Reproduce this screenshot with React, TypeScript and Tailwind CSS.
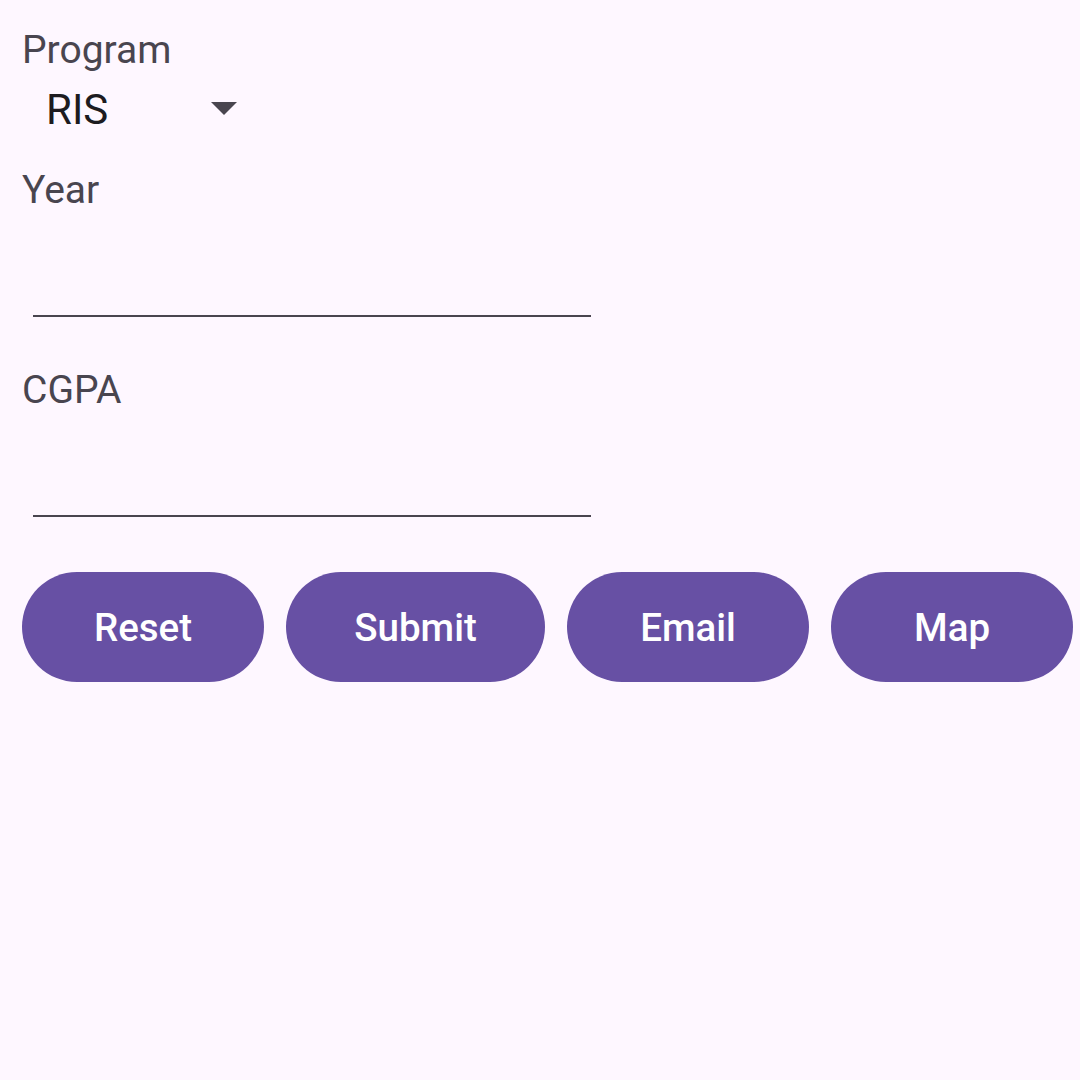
import { useState } from "react";

const buttons = [
  { label: "Reset", width: "w-[242px]" },
  { label: "Submit", width: "w-[259px]" },
  { label: "Email", width: "w-[242px]" },
  { label: "Map", width: "w-[242px]" },
];

export default function App() {
  const [program] = useState("RIS");
  const [year, setYear] = useState("");
  const [cgpa, setCgpa] = useState("");

  return (
    <div
      className="min-h-[1080px] w-[1080px] bg-[#fef7ff] px-[22px] pt-[28px]"
      style={{ fontFamily: "Roboto, 'Noto Sans', sans-serif" }}
    >
      <div className="text-[39px] leading-[45px] text-[#49454f]">Program</div>
      <div className="mt-[11px] flex h-[52px] w-[215px] items-center justify-between pl-[24px]">
        <span className="text-[42px] leading-[52px] text-[#1d1b20]">{program}</span>
        <svg width="26" height="14" viewBox="0 0 26 14" className="mt-[-2px]">
          <polygon points="0,0 26,0 13,13" fill="#49454f" />
        </svg>
      </div>

      <div className="mt-[32px] text-[39px] leading-[45px] text-[#49454f]">Year</div>
      <input
        value={year}
        onChange={(e) => setYear(e.target.value)}
        className="ml-[11px] block h-[104px] w-[558px] border-b-2 border-[#49454f] bg-transparent text-[42px] text-[#1d1b20] outline-none"
      />

      <div className="mt-[51px] text-[39px] leading-[45px] text-[#49454f]">CGPA</div>
      <input
        value={cgpa}
        onChange={(e) => setCgpa(e.target.value)}
        className="ml-[11px] block h-[104px] w-[558px] border-b-2 border-[#49454f] bg-transparent text-[42px] text-[#1d1b20] outline-none"
      />

      <div className="mt-[55px] flex gap-[22px]">
        {buttons.map((b) => (
          <button
            key={b.label}
            className={`${b.width} flex h-[110px] shrink-0 items-center justify-center rounded-full bg-[#6750a4] pt-[2px] text-[38.5px] font-medium text-white`}
          >
            {b.label}
          </button>
        ))}
      </div>
    </div>
  );
}
